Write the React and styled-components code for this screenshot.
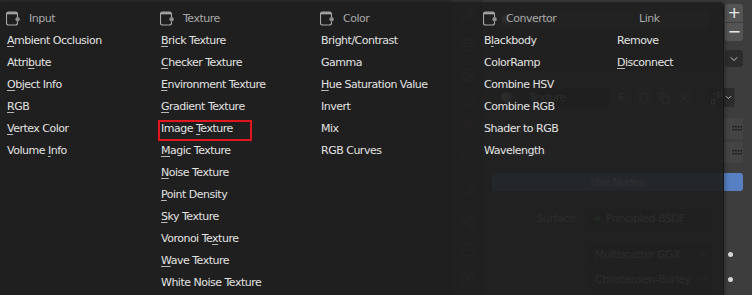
import React from "react";
import styled, { createGlobalStyle } from "styled-components";
import { Wrench, Printer, Image as ImageIcon, Droplets, Globe, Square, Share2, CircleDot, Orbit, Shield, Copy, X, ChevronDown } from "lucide-react";

const Global = createGlobalStyle`
  html, body { margin: 0; padding: 0; background: #1d1d1d; overflow: hidden; }
  * { box-sizing: border-box; }
`;

const FONT = `"DejaVu Sans", "Liberation Sans", sans-serif`;

const Screen = styled.div`
  position: relative;
  width: 752px;
  height: 295px;
  display: flex;
  overflow: hidden;
  font-family: ${FONT};
  font-size: 11px;
  letter-spacing: -0.5px;
`;

const NodeEditor = styled.div`
  width: 460px;
  background: #1e1e1e;
  border-top: 2px solid #2c2c2c;
`;

const Properties = styled.div`
  flex: 1;
  display: flex;
`;

const Tabs = styled.div`
  width: 31px;
  background: #343434;
  display: flex;
  flex-direction: column;
  align-items: center;
`;

const Tab = styled.div`
  height: 16px;
  margin-top: ${(p) => p.$mt}px;
  display: flex;
  align-items: center;
  color: ${(p) => p.$c || "#8a8a8a"};
  opacity: 0.7;
`;

const PropBody = styled.div`
  flex: 1;
  background: #3d3d3d;
  padding: 4px 9px 0 6px;
  display: flex;
  flex-direction: column;
  color: #cfcfcf;
`;

const SlotRow = styled.div`
  display: flex;
  gap: 4px;
  height: 66px;
`;

const SlotList = styled.div`
  flex: 1;
  background: #2b2b2b;
  border-radius: 3px;
  padding: 6px 11px 0 6px;
`;

const SlotItem = styled.div`
  height: 18px;
  background: #464646;
  border-radius: 2px;
  display: flex;
  align-items: center;
  gap: 6px;
  padding-left: 6px;
`;

const Ball = styled.span`
  width: 11px;
  height: 11px;
  border-radius: 50%;
  background: radial-gradient(circle at 35% 35%, #d0d0d0, #707070);
`;

const SideButtons = styled.div`
  width: 18px;
  display: flex;
  flex-direction: column;
  gap: 1px;
`;

const SideBtn = styled.div`
  height: ${(p) => p.$h || 18}px;
  margin-top: ${(p) => p.$mt || 0}px;
  background: ${(p) => p.$bg || "#545454"};
  border-radius: ${(p) => p.$r || "3px"};
  display: flex;
  align-items: center;
  justify-content: center;
  color: #e6e6e6;
  font-size: 16px;
  line-height: 1;
`;

const IDRow = styled.div`
  margin: 18px 0 0 6px;
  height: 19px;
  display: flex;
  align-items: stretch;
`;

const IDPart = styled.div`
  width: ${(p) => (p.$w ? p.$w + "px" : "auto")};
  flex: none;
  margin-left: ${(p) => p.$ml || 0}px;
  background: ${(p) => p.$bg || "#505050"};
  border-radius: ${(p) => p.$r || "0"};
  display: flex;
  align-items: center;
  justify-content: ${(p) => p.$j || "center"};
  padding-left: ${(p) => p.$pl || 0}px;
  color: #c8c8c8;
  border-right: 1px solid #333;
`;

const PanelHeader = styled.div`
  margin-top: ${(p) => p.$mt}px;
  height: 21px;
  background: #444444;
  display: flex;
  align-items: center;
  padding: 0 1px 0 8px;
  gap: 6px;
`;

const HeaderTitle = styled.span`
  flex: 1;
`;

const UseNodes = styled.div`
  margin: 10px 0 0 3px;
  height: 18px;
  background: #5680c2;
  border-radius: 3px;
  display: flex;
  align-items: center;
  justify-content: center;
  color: #ffffff;
`;

const PropRow = styled.div`
  margin-top: ${(p) => p.$mt}px;
  height: ${(p) => p.$h || 20}px;
  display: grid;
  grid-template-columns: 86px 123px 17px;
  column-gap: 14px;
  align-items: stretch;
  & > :nth-child(3) { margin-left: -8px; }
`;

const PropLabel = styled.div`
  display: flex;
  align-items: center;
  justify-content: flex-end;
`;

const Field = styled.div`
  background: ${(p) => p.$bg || "#2b2b2b"};
  border-radius: 3px;
  display: flex;
  align-items: center;
  padding: 0 3px 0 6px;
  gap: 6px;
`;

const Decor = styled.div`
  display: flex;
  align-items: center;
  justify-content: center;
`;

const Dot = styled.span`
  width: 5px;
  height: 5px;
  border-radius: 50%;
  background: ${(p) => p.$c || "#d6d6d6"};
`;

const Grow = styled.span`
  flex: 1;
`;

/* ---------- Menu ---------- */

const Menu = styled.div`
  position: absolute;
  left: 0;
  top: 2px;
  width: 723px;
  height: 310px;
  background: rgba(31, 31, 31, 0.93);
  border-radius: 0 5px 0 0;
  box-shadow: 1px 0 0 #181818, 2px 0 4px rgba(0, 0, 0, 0.35);
  padding: 5px 0 0 7px;
  display: grid;
  grid-template-columns: 154px 160px 163px 133px 1fr;
  align-items: start;
`;

const Column = styled.div`
  display: flex;
  flex-direction: column;
`;

const Header = styled.div`
  height: 22px;
  margin-left: -1px;
  display: flex;
  align-items: center;
  gap: 7px;
  color: #a8a8a8;
`;

const IconSlot = styled.span`
  width: 16px;
  height: 15px;
  display: flex;
`;

const Item = styled.div`
  height: 22px;
  display: flex;
  align-items: center;
  white-space: pre;
  color: #e2e2e2;
  position: relative;
  &::after {
    content: "";
    display: ${(p) => (p.$hl ? "block" : "none")};
    position: absolute;
    left: -3px;
    top: 3px;
    width: 90px;
    height: 17px;
    border: 2px solid #e3161d;
  }
`;

const Key = styled.span`
  text-decoration: underline;
  text-decoration-thickness: 1px;
  text-underline-offset: 2px;
  text-decoration-color: #b8b8b8;
`;

const NodeIcon = () => (
  <svg width="15" height="15" viewBox="0 0 15 15">
    <path
      d="M11.5 6 V3 a2 2 0 0 0 -2 -2 H2.5 a2 2 0 0 0 -2 2 V12 a2 2 0 0 0 2 2 H9.5 a2 2 0 0 0 2 -2 V10.6"
      fill="none"
      stroke="#a9a9a9"
      strokeWidth="1.1"
    />
    <path d="M1 2.3 H11" stroke="#a9a9a9" strokeWidth="2" />
    <circle cx="11.6" cy="8.3" r="2.2" fill="#8e8e8e" />
  </svg>
);

const Grip = () => (
  <svg width="10" height="5" viewBox="0 0 10 5">
    {[0, 1, 2, 3].map((i) =>
      [0, 1].map((j) => <rect key={i + "-" + j} x={i * 2.6 + 0.5} y={j * 3} width="1.4" height="1.4" fill="#111" />)
    )}
  </svg>
);

const NodeTreeIcon = () => (
  <svg width="14" height="14" viewBox="0 0 14 14">
    <rect x="8" y="1" width="4" height="4" fill="none" stroke="#e8e8e8" strokeWidth="1" />
    <rect x="1.5" y="9" width="3" height="4" fill="none" stroke="#e8e8e8" strokeWidth="1" />
    <path d="M8 3 H3 M10 5 L4 9" stroke="#e8e8e8" strokeWidth="1" fill="none" />
  </svg>
);

const columns = [
  {
    title: "Input",
    items: [["Ambient Occlusion", 0], ["Attribute", 5], ["Object Info", 0], ["RGB", 0], ["Vertex Color", 0], ["Volume Info", 7]],
  },
  {
    title: "Texture",
    items: [
      ["Brick Texture", 0],
      ["Checker Texture", 0],
      ["Environment Texture", 0],
      ["Gradient Texture", 0],
      ["Image Texture", 6, true],
      ["Magic Texture", 0],
      ["Noise Texture", 0],
      ["Point Density", 0],
      ["Sky Texture", 0],
      ["Voronoi Texture", 10],
      ["Wave Texture", 0],
      ["White Noise Texture", -1],
    ],
  },
  {
    title: "Color",
    items: [["Bright/Contrast", -1], ["Gamma", -1], ["Hue Saturation Value", 0], ["Invert", -1], ["Mix", -1], ["RGB Curves", -1]],
  },
  {
    title: "Convertor",
    items: [["Blackbody", 1], ["ColorRamp", -1], ["Combine HSV", -1], ["Combine RGB", -1], ["Shader to RGB", -1], ["Wavelength", -1]],
  },
  { title: "Link", noIcon: true, items: [["Remove", -1], ["Disconnect", 0]] },
];

const Label = ({ text, k }) =>
  k < 0 ? (
    <span>{text}</span>
  ) : (
    <span>
      {text.slice(0, k)}
      <Key>{text[k]}</Key>
      {text.slice(k + 1)}
    </span>
  );

const tabs = [
  { mt: 7, I: Wrench },
  { mt: 14, I: Printer },
  { mt: 14, I: ImageIcon },
  { mt: 9, I: Droplets, c: "#5f7fa6" },
  { mt: 11, I: Globe, c: "#9a4444" },
  { mt: 17, I: Square, c: "#a06a30" },
  { mt: 16, I: Wrench, c: "#6080b0" },
  { mt: 14, I: Share2 },
  { mt: 12, I: CircleDot },
  { mt: 12, I: Orbit },
];

export default function App() {
  return (
    <>
      <Global />
      <Screen>
        <NodeEditor />
        <Properties>
          <Tabs>
            {tabs.map(({ mt, I, c }, i) => (
              <Tab key={i} $mt={mt} $c={c}>
                <I size={14} strokeWidth={1.6} />
              </Tab>
            ))}
          </Tabs>
          <PropBody>
            <SlotRow>
              <SlotList>
                <SlotItem>
                  <Ball />
                  Texture
                </SlotItem>
              </SlotList>
              <SideButtons>
                <SideBtn $r="3px 3px 0 0">+</SideBtn>
                <SideBtn $r="0 0 3px 3px">−</SideBtn>
                <SideBtn $mt={8} $h={17} $bg="#2c2c2c">
                  <ChevronDown size={12} strokeWidth={1.6} />
                </SideBtn>
              </SideButtons>
            </SlotRow>
            <IDRow>
              <IDPart $w={24} $bg="#2b2b2b" $r="3px 0 0 3px">
                <Ball />
              </IDPart>
              <IDPart $w={91} $bg="#262626" $j="flex-start" $pl={10}>
                Texture
              </IDPart>
              <IDPart $w={23}>6</IDPart>
              <IDPart $w={22}>
                <Shield size={12} />
              </IDPart>
              <IDPart $w={18}>
                <Copy size={12} />
              </IDPart>
              <IDPart $w={22} $r="0 3px 3px 0">
                <X size={12} />
              </IDPart>
              <IDPart $w={26} $ml={14} $bg="#2c2c2c" $r="3px">
                <NodeTreeIcon />
                <ChevronDown size={9} strokeWidth={2} color="#e0e0e0" />
              </IDPart>
            </IDRow>
            <PanelHeader $mt={11}>
              <span>▸</span>
              <HeaderTitle>Preview</HeaderTitle>
              <Grip />
            </PanelHeader>
            <PanelHeader $mt={3}>
              <span>▾</span>
              <HeaderTitle>Surface</HeaderTitle>
              <Grip />
            </PanelHeader>
            <UseNodes>Use Nodes</UseNodes>
            <PropRow $mt={18} $h={18}>
              <PropLabel>Surface</PropLabel>
              <Field $bg="#333333">
                <Dot $c="#4caf50" />
                Principled BSDF
              </Field>
              <Decor />
            </PropRow>
            <PropRow $mt={17}>
              <span />
              <Field>
                <Grow>Multiscatter GGX</Grow>
                <ChevronDown size={11} />
              </Field>
              <Decor>
                <Dot />
              </Decor>
            </PropRow>
            <PropRow $mt={5}>
              <span />
              <Field>
                <Grow>Christensen-Burley</Grow>
                <ChevronDown size={11} />
              </Field>
              <Decor>
                <Dot />
              </Decor>
            </PropRow>
          </PropBody>
        </Properties>

        <Menu>
          {columns.map((col) => (
            <Column key={col.title}>
              <Header>
                <IconSlot>{col.noIcon ? null : <NodeIcon />}</IconSlot>
                {col.title}
              </Header>
              {col.items.map(([t, k, hl]) => (
                <Item key={t} $hl={hl}>
                  <Label text={t} k={k} />
                </Item>
              ))}
            </Column>
          ))}
        </Menu>
      </Screen>
    </>
  );
}
